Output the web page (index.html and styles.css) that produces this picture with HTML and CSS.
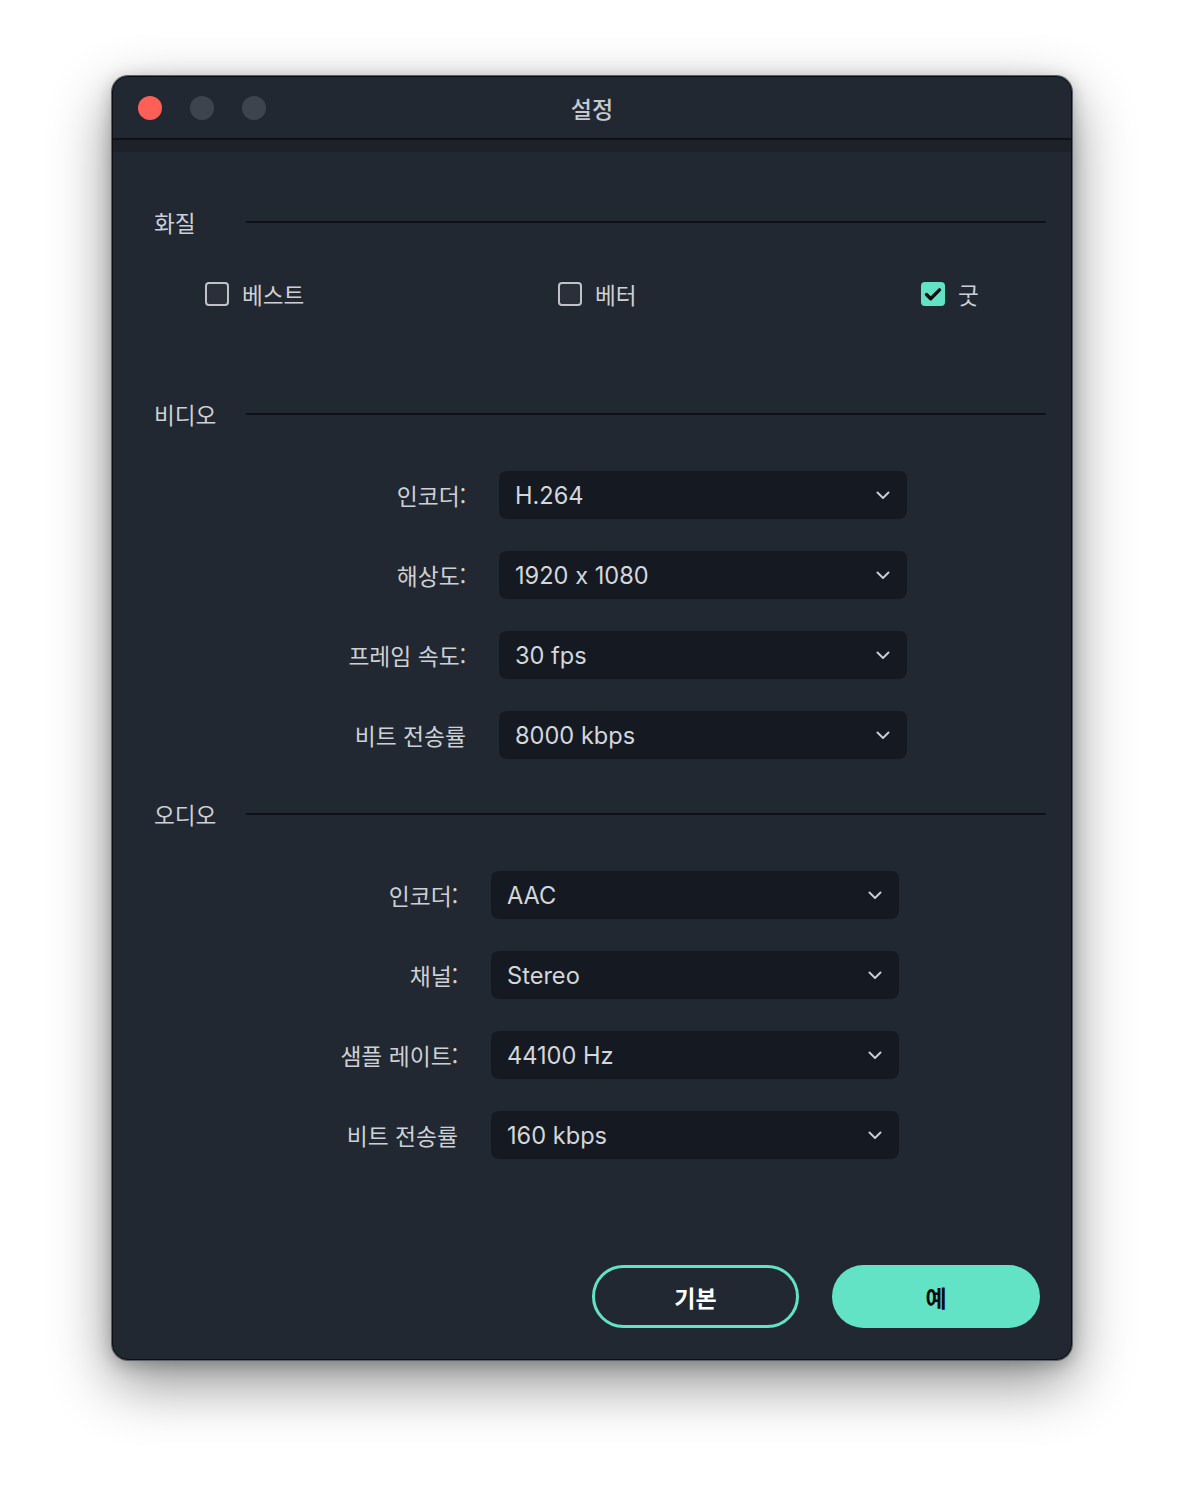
FILE: index.html
```html
<!DOCTYPE html>
<html lang="ko">
<head>
<meta charset="utf-8">
<title>설정</title>
<link rel="stylesheet" href="styles.css">
</head>
<body>
<div class="page">
  <div class="window">
    <div class="titlebar">
      <div class="lights">
        <span class="light red"></span>
        <span class="light gray"></span>
        <span class="light gray"></span>
      </div>
      <div class="title">설정</div>
    </div>
    <div class="stripe"></div>
    <div class="content">
      <div class="section-head"><span class="section-label">화질</span><span class="rule"></span></div>
      <div class="checks">
        <label class="check c1"><span class="box"></span><span class="check-label">베스트</span></label>
        <label class="check c2"><span class="box"></span><span class="check-label">베터</span></label>
        <label class="check"><span class="box checked"><svg viewBox="0 0 24 24" width="24" height="24"><path d="M5.5 12.5l4.2 4.2 8.8-8.8" fill="none" stroke="#0d0f12" stroke-width="3.4" stroke-linecap="round" stroke-linejoin="round"/></svg></span><span class="check-label">굿</span></label>
      </div>

      <div class="section-head video-head"><span class="section-label">비디오</span><span class="rule"></span></div>
      <div class="form video-form">
        <div class="form-label">인코더:</div>
        <div class="select"><span>H.264</span><svg class="chev" viewBox="0 0 14 9" width="14" height="9"><path d="M1.5 1.5l5.5 5.5 5.5-5.5" fill="none" stroke="#c9cdd2" stroke-width="2" stroke-linecap="round" stroke-linejoin="round"/></svg></div>
        <div class="form-label">해상도:</div>
        <div class="select"><span>1920 x 1080</span><svg class="chev" viewBox="0 0 14 9" width="14" height="9"><path d="M1.5 1.5l5.5 5.5 5.5-5.5" fill="none" stroke="#c9cdd2" stroke-width="2" stroke-linecap="round" stroke-linejoin="round"/></svg></div>
        <div class="form-label">프레임 속도:</div>
        <div class="select"><span>30 fps</span><svg class="chev" viewBox="0 0 14 9" width="14" height="9"><path d="M1.5 1.5l5.5 5.5 5.5-5.5" fill="none" stroke="#c9cdd2" stroke-width="2" stroke-linecap="round" stroke-linejoin="round"/></svg></div>
        <div class="form-label">비트 전송률</div>
        <div class="select"><span>8000 kbps</span><svg class="chev" viewBox="0 0 14 9" width="14" height="9"><path d="M1.5 1.5l5.5 5.5 5.5-5.5" fill="none" stroke="#c9cdd2" stroke-width="2" stroke-linecap="round" stroke-linejoin="round"/></svg></div>
      </div>

      <div class="section-head audio-head"><span class="section-label">오디오</span><span class="rule"></span></div>
      <div class="form audio-form">
        <div class="form-label">인코더:</div>
        <div class="select"><span>AAC</span><svg class="chev" viewBox="0 0 14 9" width="14" height="9"><path d="M1.5 1.5l5.5 5.5 5.5-5.5" fill="none" stroke="#c9cdd2" stroke-width="2" stroke-linecap="round" stroke-linejoin="round"/></svg></div>
        <div class="form-label">채널:</div>
        <div class="select"><span>Stereo</span><svg class="chev" viewBox="0 0 14 9" width="14" height="9"><path d="M1.5 1.5l5.5 5.5 5.5-5.5" fill="none" stroke="#c9cdd2" stroke-width="2" stroke-linecap="round" stroke-linejoin="round"/></svg></div>
        <div class="form-label">샘플 레이트:</div>
        <div class="select"><span>44100 Hz</span><svg class="chev" viewBox="0 0 14 9" width="14" height="9"><path d="M1.5 1.5l5.5 5.5 5.5-5.5" fill="none" stroke="#c9cdd2" stroke-width="2" stroke-linecap="round" stroke-linejoin="round"/></svg></div>
        <div class="form-label">비트 전송률</div>
        <div class="select"><span>160 kbps</span><svg class="chev" viewBox="0 0 14 9" width="14" height="9"><path d="M1.5 1.5l5.5 5.5 5.5-5.5" fill="none" stroke="#c9cdd2" stroke-width="2" stroke-linecap="round" stroke-linejoin="round"/></svg></div>
      </div>

      <div class="buttons">
        <button class="btn btn-outline">기본</button>
        <button class="btn btn-fill">예</button>
      </div>
    </div>
  </div>
</div>
</body>
</html>
```

FILE: styles.css
```css
html, body {
  margin: 0;
  padding: 0;
  background: #ffffff;
}
body {
  font-family: "Noto Sans CJK KR", "Noto Sans", sans-serif;
  color: #c9cdd2;
}
.page {
  width: 1184px;
  height: 1508px;
  padding: 76px 0 0 112px;
  box-sizing: border-box;
}
.window {
  width: 960px;
  height: 1284px;
  box-sizing: border-box;
  background: #222831;
  border-radius: 16px;
  border: 1px solid #0b0d10;
  box-shadow: 0 0 0 1px #5c6169, 0 22px 60px rgba(0, 0, 0, 0.45), 0 4px 18px rgba(0, 0, 0, 0.25);
  overflow: hidden;
  display: flex;
  flex-direction: column;
}
.titlebar {
  height: 61px;
  display: flex;
  align-items: center;
  position: relative;
  border-bottom: 2px solid #0e1115;
  flex-shrink: 0;
}
.lights {
  display: flex;
  gap: 28px;
  padding-left: 25px;
}
.light {
  width: 24px;
  height: 24px;
  border-radius: 50%;
  display: block;
}
.light.red { background: #fe5f57; }
.light.gray { background: #3e444d; }
.title {
  position: absolute;
  left: 0;
  right: 0;
  top: 0;
  bottom: 0;
  display: flex;
  align-items: center;
  justify-content: center;
  font-size: 23px;
  font-weight: 500;
  color: #c5c9ce;
  pointer-events: none;
}
.stripe {
  height: 12px;
  background: #1d222a;
  flex-shrink: 0;
}
.content {
  padding: 50px 25px 0 41px;
  display: flex;
  flex-direction: column;
}
.section-head {
  height: 40px;
  display: flex;
  align-items: center;
}
.section-label {
  width: 92px;
  font-size: 22.6px;
  color: #cdd1d5;
  flex-shrink: 0;
}
.rule {
  flex: 1;
  height: 2px;
  background: #0e1115;
}
.checks {
  margin-top: 32px;
  height: 40px;
  display: flex;
  align-items: center;
  padding-left: 51px;
}
.check {
  display: flex;
  align-items: center;
  gap: 13px;
  font-size: 22.6px;
  color: #cdd1d5;
}
.check.c1 { width: 353px; }
.check.c2 { width: 363px; }
.box {
  width: 24px;
  height: 24px;
  box-sizing: border-box;
  border: 2px solid #bfc3c8;
  border-radius: 4px;
  background: #29303a;
  display: flex;
  align-items: center;
  justify-content: center;
}
.box.checked {
  border: none;
  background: #62e3c5;
}
.video-head { margin-top: 80px; }
.audio-head { margin-top: 35px; }
.form {
  display: grid;
  grid-template-columns: 200px 408px;
  column-gap: 33px;
  row-gap: 32px;
  margin-top: 37px;
  align-items: center;
}
.video-form { padding-left: 112px; }
.audio-form { padding-left: 104px; }
.form-label {
  text-align: right;
  font-size: 22.8px;
  color: #cdd1d5;
}
.select {
  height: 48px;
  background: #151a22;
  border-radius: 8px;
  display: flex;
  align-items: center;
  justify-content: space-between;
  padding: 0 17px 0 16px;
  font-family: "Inter", "Noto Sans CJK KR", sans-serif;
  font-feature-settings: "calt" 0;
  font-size: 23.6px;
  color: #d3d6da;
}
.chev { display: block; margin-top: 1px; }
.buttons {
  margin-top: 106px;
  display: flex;
  justify-content: flex-end;
  gap: 33px;
  padding-right: 6px;
}
.btn {
  width: 207px;
  height: 63px;
  border-radius: 32px;
  font-family: "Noto Sans CJK KR", sans-serif;
  font-size: 23px;
  font-weight: 700;
  box-sizing: border-box;
  cursor: pointer;
}
.btn-outline {
  background: transparent;
  border: 3px solid #62e3c5;
  color: #ffffff;
}
.btn-fill {
  width: 208px;
  background: #62e3c5;
  border: none;
  color: #0a0c0f;
}
```
